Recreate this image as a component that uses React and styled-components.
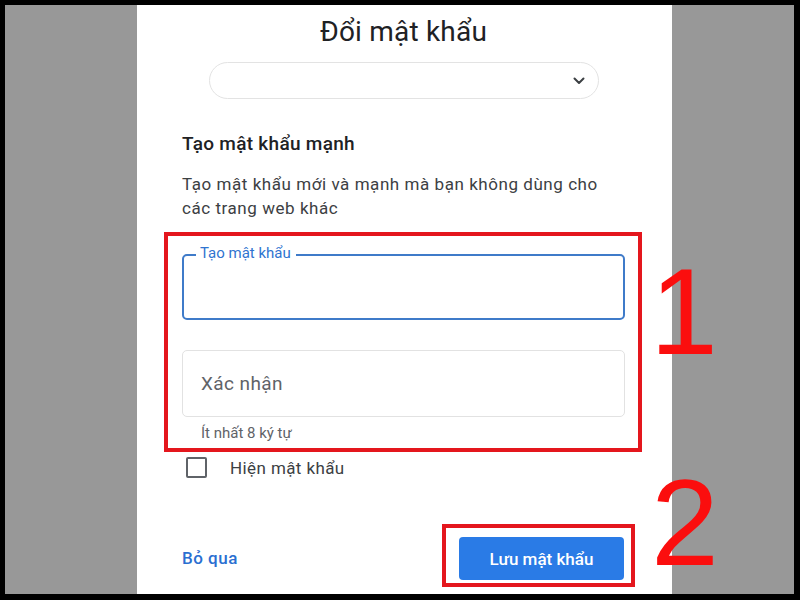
import React from "react";
import styled, { createGlobalStyle } from "styled-components";

const Global = createGlobalStyle`
  html, body { margin: 0; padding: 0; }
  body { font-family: Roboto, "Noto Sans", Arial, sans-serif; }
  * { box-sizing: border-box; }
`;

const Frame = styled.div`
  position: relative;
  width: 800px;
  height: 600px;
  background: #000;
  padding: 5px 6px 6px 5px;
  overflow: hidden;
`;

const Backdrop = styled.div`
  height: 100%;
  background: #989898;
  display: flex;
  padding-left: 132px;
`;

const Panel = styled.main`
  width: 535px;
  height: 100%;
  background: #fff;
  padding: 9px 47px 0 45px;
  display: flex;
  flex-direction: column;
`;

const Title = styled.h1`
  margin: 0;
  font-size: 28px;
  line-height: 36px;
  font-weight: 400;
  letter-spacing: 0.2px;
  color: #202124;
  text-align: center;
`;

const AccountPill = styled.div`
  align-self: center;
  margin-top: 12px;
  width: 390px;
  height: 37px;
  border: 1px solid #e3e3e3;
  border-radius: 19px;
  display: flex;
  align-items: center;
  justify-content: flex-end;
  padding-right: 13px;
  color: #3c4043;
`;

const Heading = styled.h2`
  margin: 33px 0 0;
  font-size: 19px;
  line-height: 24px;
  font-weight: 500;
  letter-spacing: 0.3px;
  color: #202124;
`;

const Description = styled.p`
  margin: 16px 0 0;
  font-size: 17px;
  line-height: 24px;
  letter-spacing: 0.55px;
  color: #3c4043;
`;

const Highlight = styled.div`
  border: 4px solid #e4161d;
  margin: ${(p) => p.$margin};
  padding: ${(p) => p.$padding};
`;

const Field = styled.div`
  position: relative;
  height: ${(p) => p.$height}px;
  margin-top: ${(p) => p.$top}px;
  border: ${(p) => (p.$focused ? "2px solid #3f7bc9" : "1px solid #e2e2e2")};
  border-radius: 5px;
  display: flex;
  align-items: center;
  padding-left: 18px;
`;

const FloatingLabel = styled.span`
  position: absolute;
  left: 12px;
  top: -11px;
  padding: 0 5px 0 4px;
  background: #fff;
  font-size: 15px;
  line-height: 17px;
  color: #2f74d0;
`;

const Placeholder = styled.span`
  font-size: 19px;
  letter-spacing: 0.4px;
  color: #5f6368;
`;

const Helper = styled.div`
  margin: 7px 0 0 19px;
  font-size: 15px;
  line-height: 18px;
  color: #5f6368;
`;

const CheckRow = styled.label`
  display: flex;
  align-items: center;
  gap: 23px;
  margin: 5px 0 0 4px;
  font-size: 17px;
  letter-spacing: 0.4px;
  color: #3c4043;
`;

const Box = styled.span`
  width: 21px;
  height: 21px;
  border: 2px solid #5f6368;
  border-radius: 2px;
`;

const Footer = styled.div`
  display: flex;
  align-items: center;
  justify-content: space-between;
  margin-top: 46px;
`;

const TextButton = styled.span`
  font-size: 17px;
  font-weight: 500;
  letter-spacing: 0.5px;
  color: #2a6fd1;
  margin-top: 4px;
`;

const PrimaryButton = styled.button`
  width: 165px;
  height: 43px;
  border: none;
  border-radius: 4px;
  background: #2a7be6;
  color: #fff;
  font-family: inherit;
  font-size: 17px;
  font-weight: 500;
`;

const Marker = styled.span`
  position: absolute;
  left: ${(p) => p.$x}px;
  top: ${(p) => p.$y}px;
  font-family: "Liberation Sans", Arial, sans-serif;
  font-size: 122px;
  line-height: 1;
  color: #fb0e0e;
`;

const Chevron = () => (
  <svg width="12" height="8" viewBox="0 0 12 8" fill="none">
    <path d="M1.5 1.5 6 6l4.5-4.5" stroke="#3c4043" strokeWidth="2" strokeLinecap="round" strokeLinejoin="round" />
  </svg>
);

export default function App() {
  return (
    <>
      <Global />
      <Frame>
        <Backdrop>
          <Panel>
            <Title>Đổi mật khẩu</Title>
            <AccountPill>
              <Chevron />
            </AccountPill>
            <Heading>Tạo mật khẩu mạnh</Heading>
            <Description>
              Tạo mật khẩu mới và mạnh mà bạn không dùng cho
              <br />
              các trang web khác
            </Description>
            <Highlight $margin="12px -17px 0 -18px" $padding="0 13px 6px 14px">
              <Field $focused $height={66} $top={18}>
                <FloatingLabel>Tạo mật khẩu</FloatingLabel>
              </Field>
              <Field $height={67} $top={30}>
                <Placeholder>Xác nhận</Placeholder>
              </Field>
              <Helper>Ít nhất 8 ký tự</Helper>
            </Highlight>
            <CheckRow>
              <Box />
              Hiện mật khẩu
            </CheckRow>
            <Footer>
              <TextButton>Bỏ qua</TextButton>
              <Highlight $margin="0 -10px 0 0" $padding="9px 7px 3px 13px">
                <PrimaryButton>Lưu mật khẩu</PrimaryButton>
              </Highlight>
            </Footer>
          </Panel>
        </Backdrop>
        <Marker $x={650} $y={251}>1</Marker>
        <Marker $x={651} $y={462}>2</Marker>
      </Frame>
    </>
  );
}
